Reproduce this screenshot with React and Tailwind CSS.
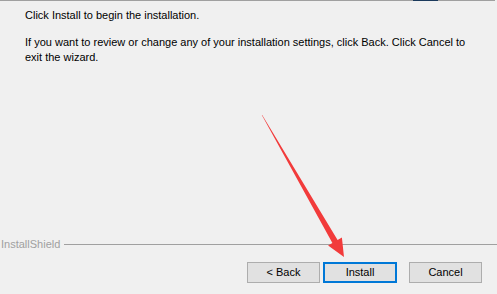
export default function App() {
  const font = { fontFamily: '"Liberation Sans", Arial, sans-serif' };
  return (
    <div className="relative w-[497px] h-[294px] bg-[#f0f0f0] overflow-hidden flex flex-col text-[#000]" style={font}>
      <div className="h-px bg-[#a0a0a0] w-[495px] flex">
        <div className="ml-[413px] w-[25px] bg-[#1b3a5c]" />
      </div>
      <div className="pl-[25px] pt-[7px] text-[11px] leading-[15px] whitespace-nowrap">
        <p>Click Install to begin the installation.</p>
        <p className="mt-[12px]">If you want to review or change any of your installation settings, click Back. Click Cancel to</p>
        <p>exit the wizard.</p>
      </div>
      <div className="flex-1" />
      <div className="flex items-center h-[14px] pl-[1px]">
        <span className="text-[11px] leading-[14px] text-[#a0a0a0]">InstallShield</span>
        <div className="flex-1 h-px bg-[#a0a0a0] ml-[4px]" />
      </div>
      <div className="flex justify-end gap-[3px] pr-[15px] mt-[11px] mb-[11px] text-[11px]">
        <button className="w-[73px] h-[21px] bg-[#e1e1e1] border border-[#adadad] leading-[19px]">&lt; Back</button>
        <button className="w-[74px] h-[21px] bg-[#e1e1e1] border-2 border-[#0078d7] leading-[17px] mr-[9px]">Install</button>
        <button className="w-[73px] h-[21px] bg-[#e1e1e1] border border-[#adadad] leading-[19px]">Cancel</button>
      </div>
      <svg className="absolute left-0 top-0" width="497" height="294" viewBox="0 0 497 294">
        <polygon
          points="261.8,115.1 262.2,114.9 337.6,239.9 341.9,237.4 344,257 328.1,245.4 332.4,242.9"
          fill="#f23b3b"
        />
      </svg>
    </div>
  );
}
